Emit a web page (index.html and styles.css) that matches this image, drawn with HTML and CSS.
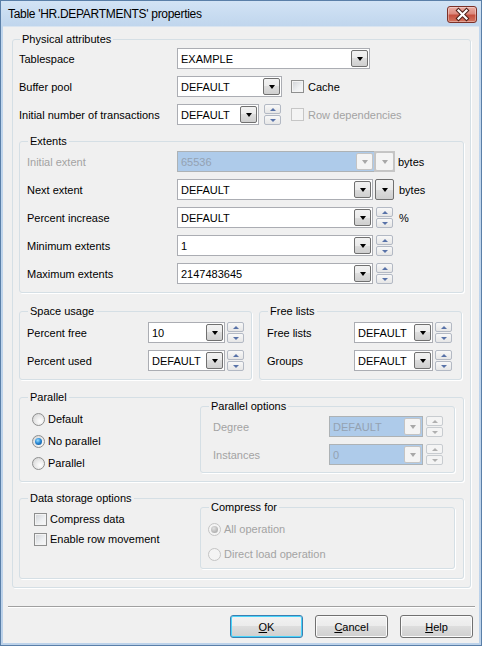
FILE: index.html
```html
<!DOCTYPE html>
<html>
<head>
<meta charset="utf-8">
<title>Table properties</title>
<link rel="stylesheet" href="styles.css">
</head>
<body>
<div class="window">
  <div class="titlebar">
    <span class="title">Table 'HR.DEPARTMENTS' properties</span>
    <div class="close">
      <svg width="27" height="15" viewBox="0 0 27 15"><path d="M9.5 3.5 L17.5 11.5 M17.5 3.5 L9.5 11.5" stroke="#4a1e18" stroke-width="4.2" stroke-linecap="square"/><path d="M9.5 3.5 L17.5 11.5 M17.5 3.5 L9.5 11.5" stroke="#fff" stroke-width="2.2" stroke-linecap="square"/></svg>
    </div>
  </div>
  <div class="client">
    <fieldset class="grp outer">
      <legend>Physical attributes</legend>
      <div class="outer-body">
        <div class="form f-phys">
          <span>Tablespace</span>
          <div class="ctl"><div class="combo w193"><span class="val">EXAMPLE</span><span class="dd"></span></div></div>
          <span>Buffer pool</span>
          <div class="ctl"><div class="combo w105"><span class="val">DEFAULT</span><span class="dd"></span></div><span class="chk ml9"></span><span class="clbl">Cache</span></div>
          <span>Initial number of transactions</span>
          <div class="ctl"><div class="combo w82"><span class="val">DEFAULT</span><span class="dd"></span></div><span class="spin ml5"><span class="up"></span><span class="dn"></span></span><span class="chk dis ml10"></span><span class="clbl dtxt">Row dependencies</span></div>
        </div>

        <fieldset class="grp extents">
          <legend>Extents</legend>
          <div class="form f-ext">
            <span class="dtxt">Initial extent</span>
            <div class="ctl"><div class="diswrap"><div class="combo dis w196"><span class="val">65536</span><span class="dd dis"></span></div><span class="btn1 dis"></span></div><span class="unit ml3">bytes</span></div>
            <span>Next extent</span>
            <div class="ctl"><div class="combo w196"><span class="val">DEFAULT</span><span class="dd"></span></div><span class="btn1 ml2"></span><span class="unit ml5">bytes</span></div>
            <span>Percent increase</span>
            <div class="ctl"><div class="combo w196"><span class="val">DEFAULT</span><span class="dd"></span></div><span class="spin ml3"><span class="up"></span><span class="dn"></span></span><span class="unit ml6">%</span></div>
            <span>Minimum extents</span>
            <div class="ctl"><div class="combo w196"><span class="val">1</span><span class="dd"></span></div><span class="spin ml3"><span class="up"></span><span class="dn"></span></span></div>
            <span>Maximum extents</span>
            <div class="ctl"><div class="combo w196"><span class="val">2147483645</span><span class="dd"></span></div><span class="spin ml3"><span class="up"></span><span class="dn"></span></span></div>
          </div>
        </fieldset>

        <div class="pair">
          <fieldset class="grp space">
            <legend>Space usage</legend>
            <div class="form f-space">
              <span>Percent free</span>
              <div class="ctl"><div class="combo w77"><span class="val">10</span><span class="dd"></span></div><span class="spin ml2"><span class="up"></span><span class="dn"></span></span></div>
              <span>Percent used</span>
              <div class="ctl"><div class="combo w77"><span class="val">DEFAULT</span><span class="dd"></span></div><span class="spin ml2"><span class="up"></span><span class="dn"></span></span></div>
            </div>
          </fieldset>
          <fieldset class="grp free">
            <legend>Free lists</legend>
            <div class="form f-free">
              <span>Free lists</span>
              <div class="ctl"><div class="combo w79"><span class="val">DEFAULT</span><span class="dd"></span></div><span class="spin ml2"><span class="up"></span><span class="dn"></span></span></div>
              <span>Groups</span>
              <div class="ctl"><div class="combo w79"><span class="val">DEFAULT</span><span class="dd"></span></div><span class="spin ml2"><span class="up"></span><span class="dn"></span></span></div>
            </div>
          </fieldset>
        </div>

        <fieldset class="grp wide parallel">
          <legend>Parallel</legend>
          <div class="split split-par">
            <div class="col radios">
              <div class="opt"><span class="rad"></span><span class="olbl">Default</span></div>
              <div class="opt"><span class="rad on"></span><span class="olbl">No parallel</span></div>
              <div class="opt"><span class="rad"></span><span class="olbl">Parallel</span></div>
            </div>
            <fieldset class="grp sub">
              <legend>Parallel options</legend>
              <div class="form f-popt">
                <span class="dtxt">Degree</span>
                <div class="ctl"><div class="combo dis w94"><span class="val">DEFAULT</span><span class="dd dis"></span></div><span class="spin dis ml3"><span class="up"></span><span class="dn"></span></span></div>
                <span class="dtxt">Instances</span>
                <div class="ctl"><div class="combo dis w94"><span class="val">0</span><span class="dd dis"></span></div><span class="spin dis ml3"><span class="up"></span><span class="dn"></span></span></div>
              </div>
            </fieldset>
          </div>
        </fieldset>

        <fieldset class="grp wide storage">
          <legend>Data storage options</legend>
          <div class="split split-data">
            <div class="col checks">
              <div class="opt2"><span class="chk"></span><span class="olbl">Compress data</span></div>
              <div class="opt2"><span class="chk"></span><span class="olbl">Enable row movement</span></div>
            </div>
            <fieldset class="grp sub">
              <legend>Compress for</legend>
              <div class="cradios">
                <div class="opt2"><span class="rad dis on"></span><span class="olbl dtxt">All operation</span></div>
                <div class="opt2"><span class="rad dis"></span><span class="olbl dtxt">Direct load operation</span></div>
              </div>
            </fieldset>
          </div>
        </fieldset>
      </div>
    </fieldset>

    <div class="sep"></div>
    <div class="buttons">
      <div class="btn def"><span><u>O</u>K</span></div>
      <div class="btn"><span><u>C</u>ancel</span></div>
      <div class="btn"><span><u>H</u>elp</span></div>
    </div>
  </div>
</div>
</body>
</html>
```

FILE: styles.css
```css
* { box-sizing: border-box; }
html, body { margin: 0; padding: 0; }
body {
  width: 482px; height: 646px; overflow: hidden;
  font-family: "Liberation Sans", Arial, sans-serif;
  font-size: 11px; color: #000;
  background: #bdd3eb;
}
.window {
  width: 482px; height: 646px;
  border: 1px solid #5a7fa8;
  background: linear-gradient(#d2e3f5 0, #c0d6ed 25px, #bcd2ea 100%);
  display: flex; flex-direction: column;
}
.titlebar {
  height: 25px; flex: none;
  display: flex; align-items: center; justify-content: space-between;
  padding: 0 4px 0 7px;
}
.title { font-size: 12px; letter-spacing: -0.3px; color: #000; padding-top: 1px; }
.close {
  width: 30px; height: 17px; margin-top: 1px;
  border: 1px solid #7c3128; border-radius: 3px;
  background: linear-gradient(#e9aca3 0, #dc8a7e 45%, #c5503f 55%, #d3745f 100%);
  box-shadow: inset 0 0 0 1px rgba(255,255,255,0.35);
  display: flex; align-items: center; justify-content: center;
}
.close svg { display: block; }
.client {
  flex: 1; margin: 0 2px 2px 2px;
  background: #f0f0f0;
  border-top: 1px solid #d9e4f0;
  display: flex; flex-direction: column;
}

/* group boxes */
.grp {
  margin: 0; padding: 0; min-width: 0;
  border: 1px solid #d5dfe5; border-radius: 3px;
  box-shadow: 1px 1px 0 #fff;
}
.grp > legend { padding: 0 2px; line-height: 14px; font-size: 11px; margin-left: 8px; }
.outer { margin: 5px 0 0 9px; width: 459px; }
.outer > legend { margin-left: 7px; }
.outer-body { padding: 2px 0 8px 6px; }

.form {
  display: grid; row-gap: 7px; grid-auto-rows: 21px; align-items: center;
}
.form > span { white-space: nowrap; }
.f-phys { grid-template-columns: 158px auto; }
.extents { width: 445px; margin-top: 9px; }
.f-ext { grid-template-columns: 150px auto; padding: 3px 0 8px 7px; }
.pair { display: flex; gap: 7px; margin-top: 11px; }
.space { width: 233px; }
.free { width: 203px; }
.f-space { grid-template-columns: 121px auto; padding: 4px 0 8px 7px; }
.f-free { grid-template-columns: 87px auto; padding: 4px 0 8px 7px; }
.wide { width: 445px; }
.parallel { margin-top: 10px; }
.storage { margin-top: 9px; }
.split { display: flex; align-items: flex-start; }
.split-par { padding: 0 0 7px 12px; }
.split-data { padding: 0 0 9px 14px; }
.radios { width: 168px; padding-top: 4px; }
.checks { width: 166px; padding-top: 4px; }
.sub { width: 255px; margin-top: -5px; }
.f-popt { grid-template-columns: 116px auto; padding: 3px 0 7px 12px; }
.cradios { padding: 5px 0 4px 7px; display: flex; flex-direction: column; gap: 5px; }

.opt { height: 22px; display: flex; align-items: center; }
.opt2 { height: 20px; display: flex; align-items: center; }
.olbl { margin-left: 3px; white-space: nowrap; }

.ctl { display: flex; align-items: center; height: 21px; }
.dtxt { color: #a3a3a3; }
.clbl { margin-left: 4px; white-space: nowrap; }
.unit { white-space: nowrap; }
.ml2 { margin-left: 2px; } .ml3 { margin-left: 3px; } .ml5 { margin-left: 5px; }
.ml6 { margin-left: 6px; } .ml9 { margin-left: 9px; } .ml10 { margin-left: 10px; }

/* combo box */
.combo {
  height: 21px; flex: none;
  border: 1px solid #abadb3; background: #fff;
  display: flex; align-items: stretch;
}
.w193 { width: 193px; } .w105 { width: 105px; } .w82 { width: 82px; }
.w196 { width: 196px; } .w77 { width: 77px; } .w79 { width: 79px; } .w94 { width: 94px; }
.combo .val { flex: 1; padding-left: 3px; display: flex; align-items: center; white-space: nowrap; overflow: hidden; }
.dd, .btn1 {
  flex: none; width: 17px; margin: 1px;
  border: 1px solid #707070; border-radius: 2px;
  background: linear-gradient(#f2f2f2 0, #ebebeb 50%, #dddddd 50%, #cfcfcf 100%);
  display: flex; align-items: center; justify-content: center;
}
.btn1 { width: 19px; height: 21px; margin: 0; }
.ctl .btn1.ml2 { margin-left: 2px; }
.dd::after, .btn1::after {
  content: ""; display: block; margin-top: 1px;
  border-left: 3.5px solid transparent; border-right: 3.5px solid transparent;
  border-top: 4px solid #000;
}
.combo.dis { background: #aecbea; color: #94a2b2; border-color: #adb2b5; }
.dd.dis, .btn1.dis { border-color: #c4c4c4; background: #f4f4f4; }
.dd.dis::after, .btn1.dis::after { border-top-color: #a8a8a8; }
.diswrap { display: flex; background: #c6c6c6; }
.diswrap .combo.dis { border-right: none; width: 197px; }
.diswrap .btn1.dis { margin: 1px 1px 1px 1px; height: 19px; }

/* spinner */
.spin { width: 17px; height: 21px; flex: none; display: flex; flex-direction: column; gap: 1px; }
.spin > span {
  flex: 1; border: 1px solid #b3b9c4; border-radius: 2px;
  background: linear-gradient(#f8f8f8, #e6e6e6);
  display: flex; align-items: center; justify-content: center;
}
.spin .up::after {
  content: ""; border-left: 3px solid transparent; border-right: 3px solid transparent;
  border-bottom: 3px solid #5872a8;
}
.spin .dn::after {
  content: ""; border-left: 3px solid transparent; border-right: 3px solid transparent;
  border-top: 3px solid #5872a8;
}
.spin.dis > span { border-color: #c8ccd0; background: #f4f4f4; }
.spin.dis .up::after { border-bottom-color: #b0b0b0; }
.spin.dis .dn::after { border-top-color: #b0b0b0; }

/* checkbox */
.chk {
  width: 13px; height: 13px; flex: none; display: block;
  border: 1px solid #8e8f8f;
  background: linear-gradient(135deg, #cfd2d6 0, #eef0f2 60%, #f8f8f8 100%);
  box-shadow: inset 0 0 0 1px #f3f3f3;
}
.chk.dis { border-color: #c6c6c6; background: #f4f4f4; box-shadow: none; }

/* radio */
.rad {
  width: 13px; height: 13px; flex: none; border-radius: 50%;
  border: 1px solid #8e8f8f;
  background: radial-gradient(circle at 65% 65%, #ffffff 0, #e8e8e8 50%, #cfcfcf 100%);
  display: flex; align-items: center; justify-content: center;
}
.rad.on::after {
  content: ""; width: 7px; height: 7px; border-radius: 50%;
  background: radial-gradient(circle at 40% 35%, #9ee0ff 0, #2b8ad6 45%, #0d4a86 100%);
}
.rad.dis { border-color: #c4c4c4; background: #f4f4f4; }
.rad.dis.on::after { background: radial-gradient(circle at 40% 35%, #e2e2e2 0, #b8b8b8 60%, #a0a0a0 100%); }

/* separator and buttons */
.sep { height: 1px; margin: 18px 4px 0 5px; background: #a0a0a0; box-shadow: 0 1px 0 #fff; }
.buttons { display: flex; justify-content: flex-end; gap: 12px; margin-top: 8px; padding-right: 6px; }
.btn {
  width: 73px; height: 23px;
  border: 1px solid #707070; border-radius: 3px;
  background: linear-gradient(#f2f2f2 0, #ebebeb 50%, #dddddd 50%, #cfcfcf 100%);
  box-shadow: inset 0 0 0 1px #fbfbfb;
  display: flex; align-items: center; justify-content: center;
}
.btn.def {
  border-color: #3c7fb1;
  box-shadow: inset 0 0 0 1px #48d4fb;
  background: linear-gradient(#eaf6fd 0, #d9f0fc 50%, #bee6fd 50%, #a7d9f5 100%);
}
.btn.def { background: linear-gradient(#f2f2f2 0, #ebebeb 50%, #dddddd 50%, #cfcfcf 100%); }
```
